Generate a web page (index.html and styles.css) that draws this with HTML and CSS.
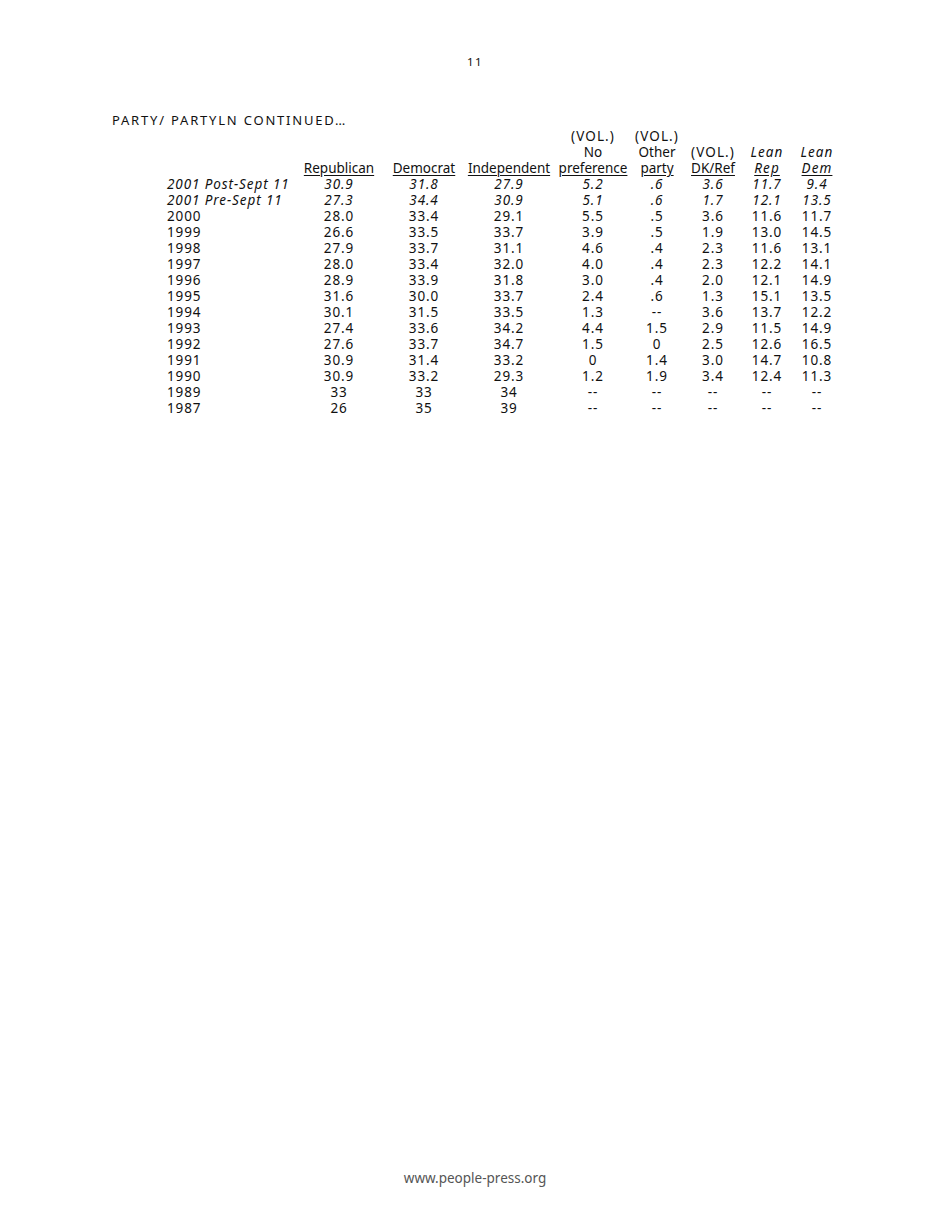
FILE: index.html
```html
<!DOCTYPE html>
<html>
<head>
<meta charset="utf-8">
<link rel="stylesheet" href="styles.css">
</head>
<body>
<div class="page">
  <div class="pagenum">11</div>
  <div class="title">PARTY/ PARTYLN CONTINUED…</div>
  <div class="table">
    <div class="row head">
      <span></span><span></span><span></span><span></span>
      <span class="sp">(VOL.)</span><span class="sp">(VOL.)</span>
      <span></span><span></span><span></span>
    </div>
    <div class="row head">
      <span></span><span></span><span></span><span></span>
      <span>No</span><span>Other</span><span class="sp">(VOL.)</span>
      <span class="it sp">Lean</span><span class="it sp">Lean</span>
    </div>
    <div class="row head">
      <span></span>
      <span class="u">Republican</span><span class="u">Democrat</span><span class="u">Independent</span>
      <span class="u">preference</span><span class="u">party</span><span class="u">DK/Ref</span>
      <span class="u it sp">Rep</span><span class="u it sp">Dem</span>
    </div>
    <div class="row it"><span class="lbl">2001 Post-Sept 11</span><span>30.9</span><span>31.8</span><span>27.9</span><span>5.2</span><span>.6</span><span>3.6</span><span>11.7</span><span>9.4</span></div>
    <div class="row it"><span class="lbl">2001 Pre-Sept 11</span><span>27.3</span><span>34.4</span><span>30.9</span><span>5.1</span><span>.6</span><span>1.7</span><span>12.1</span><span>13.5</span></div>
    <div class="row"><span class="lbl">2000</span><span>28.0</span><span>33.4</span><span>29.1</span><span>5.5</span><span>.5</span><span>3.6</span><span>11.6</span><span>11.7</span></div>
    <div class="row"><span class="lbl">1999</span><span>26.6</span><span>33.5</span><span>33.7</span><span>3.9</span><span>.5</span><span>1.9</span><span>13.0</span><span>14.5</span></div>
    <div class="row"><span class="lbl">1998</span><span>27.9</span><span>33.7</span><span>31.1</span><span>4.6</span><span>.4</span><span>2.3</span><span>11.6</span><span>13.1</span></div>
    <div class="row"><span class="lbl">1997</span><span>28.0</span><span>33.4</span><span>32.0</span><span>4.0</span><span>.4</span><span>2.3</span><span>12.2</span><span>14.1</span></div>
    <div class="row"><span class="lbl">1996</span><span>28.9</span><span>33.9</span><span>31.8</span><span>3.0</span><span>.4</span><span>2.0</span><span>12.1</span><span>14.9</span></div>
    <div class="row"><span class="lbl">1995</span><span>31.6</span><span>30.0</span><span>33.7</span><span>2.4</span><span>.6</span><span>1.3</span><span>15.1</span><span>13.5</span></div>
    <div class="row"><span class="lbl">1994</span><span>30.1</span><span>31.5</span><span>33.5</span><span>1.3</span><span>--</span><span>3.6</span><span>13.7</span><span>12.2</span></div>
    <div class="row"><span class="lbl">1993</span><span>27.4</span><span>33.6</span><span>34.2</span><span>4.4</span><span>1.5</span><span>2.9</span><span>11.5</span><span>14.9</span></div>
    <div class="row"><span class="lbl">1992</span><span>27.6</span><span>33.7</span><span>34.7</span><span>1.5</span><span>0</span><span>2.5</span><span>12.6</span><span>16.5</span></div>
    <div class="row"><span class="lbl">1991</span><span>30.9</span><span>31.4</span><span>33.2</span><span>0</span><span>1.4</span><span>3.0</span><span>14.7</span><span>10.8</span></div>
    <div class="row"><span class="lbl">1990</span><span>30.9</span><span>33.2</span><span>29.3</span><span>1.2</span><span>1.9</span><span>3.4</span><span>12.4</span><span>11.3</span></div>
    <div class="row"><span class="lbl">1989</span><span>33</span><span>33</span><span>34</span><span>--</span><span>--</span><span>--</span><span>--</span><span>--</span></div>
    <div class="row"><span class="lbl">1987</span><span>26</span><span>35</span><span>39</span><span>--</span><span>--</span><span>--</span><span>--</span><span>--</span></div>
  </div>
  <div class="footer">www.people-press.org</div>
</div>
</body>
</html>
```

FILE: styles.css
```css
html, body {
  margin: 0;
  padding: 0;
  background: #fff;
}
body {
  font-family: "Noto Sans", "Open Sans", sans-serif;
  font-size: 13.5px;
  line-height: 16px;
  color: #111;
}
.page {
  width: 950px;
  height: 1230px;
  display: flex;
  flex-direction: column;
  box-sizing: border-box;
  padding-top: 54px;
  padding-bottom: 44px;
}
.pagenum {
  text-align: center;
  font-size: 11.5px;
  letter-spacing: 1.5px;
}
.title {
  margin-top: 42px;
  margin-left: 112px;
  font-size: 13px;
  letter-spacing: 1.8px;
}
.table {
  margin-left: 167px;
  display: flex;
  flex-direction: column;
}
.row {
  display: grid;
  grid-template-columns: 129px 86px 84px 86px 82px 46px 66px 42px 58px;
  height: 16px;
  letter-spacing: 0.9px;
}
.row span {
  text-align: center;
  white-space: nowrap;
}
.row span.lbl {
  text-align: left;
}
.head {
  letter-spacing: 0;
}
.sp {
  letter-spacing: 1.1px;
}
.u {
  text-decoration: underline;
  text-underline-offset: 2px;
}
.it {
  font-style: italic;
}
.footer {
  margin-top: auto;
  text-align: center;
  color: #555;
  font-size: 13.5px;
}
```
